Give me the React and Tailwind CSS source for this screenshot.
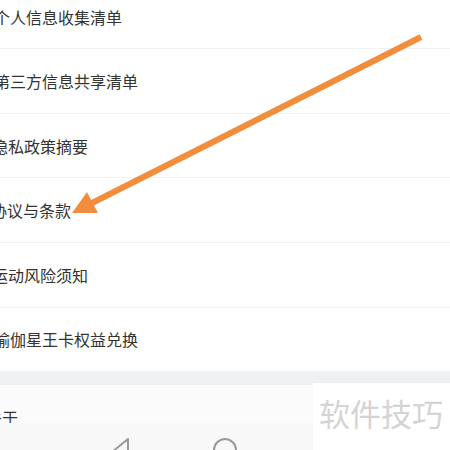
import React from 'react';

const rows = [
  { label: '个人信息收集清单', shift: '-ml-[6px]' },
  { label: '第三方信息共享清单', shift: '-ml-[6px]' },
  { label: '隐私政策摘要', shift: '-ml-[8px]' },
  { label: '协议与条款', shift: '-ml-[9px]' },
  { label: '运动风险须知', shift: '-ml-[8px]' },
  { label: '瑜伽星王卡权益兑换', shift: '-ml-[6px]' },
];

const Arrow = () => (
  <svg className="absolute left-0 top-0" width="450" height="450" viewBox="0 0 450 450">
    <line x1="421" y1="37" x2="90" y2="204" stroke="#f28d3c" strokeWidth="6" />
    <polygon points="72,213 98,213 87,192" fill="#f28d3c" />
  </svg>
);

const NavBar = () => (
  <div className="relative h-[27px] bg-[#f8f8f8] overflow-hidden">
    <svg className="absolute left-[108px] top-[14px]" width="26" height="30" viewBox="0 0 26 30">
      <path d="M20 2 L4 15 L20 28 Z" fill="none" stroke="#9a9a9a" strokeWidth="2" strokeLinejoin="round" />
    </svg>
    <svg className="absolute left-[212px] top-[14px]" width="26" height="26" viewBox="0 0 26 26">
      <circle cx="13" cy="13" r="11" fill="none" stroke="#9a9a9a" strokeWidth="2" />
    </svg>
  </div>
);

export default function App() {
  return (
    <div
      className="relative w-[450px] h-[450px] overflow-hidden bg-white text-[#333]"
      style={{ fontFamily: '"Noto Sans CJK SC", "Noto Sans", sans-serif' }}
    >
      <div className="-mt-[15.3px]">
        {rows.map((row, i) => (
          <div
            key={i}
            className="h-[64.6px] flex items-center border-b border-[#f1f1f1]"
          >
            <span className={`text-[16px] leading-none whitespace-nowrap ${row.shift}`}>{row.label}</span>
          </div>
        ))}
      </div>

      {/* section gap */}
      <div className="h-[13px] bg-[#eff0f2]" />

      {/* about row, cut by the nav bar */}
      <div className="h-[38px] bg-[#fbfbfb] overflow-hidden">
        <span className="block -ml-[14px] pt-[24px] text-[16px] leading-none">关于</span>
      </div>

      <NavBar />

      <Arrow />

      {/* watermark */}
      <div className="absolute left-[313px] top-[383px] w-[137px] h-[67px] bg-white flex items-start">
        <span className="mt-[14px] ml-[6px] text-[31px] leading-none tracking-[0px] text-[#d4d4d4] whitespace-nowrap">
          软件技巧
        </span>
      </div>
    </div>
  );
}
